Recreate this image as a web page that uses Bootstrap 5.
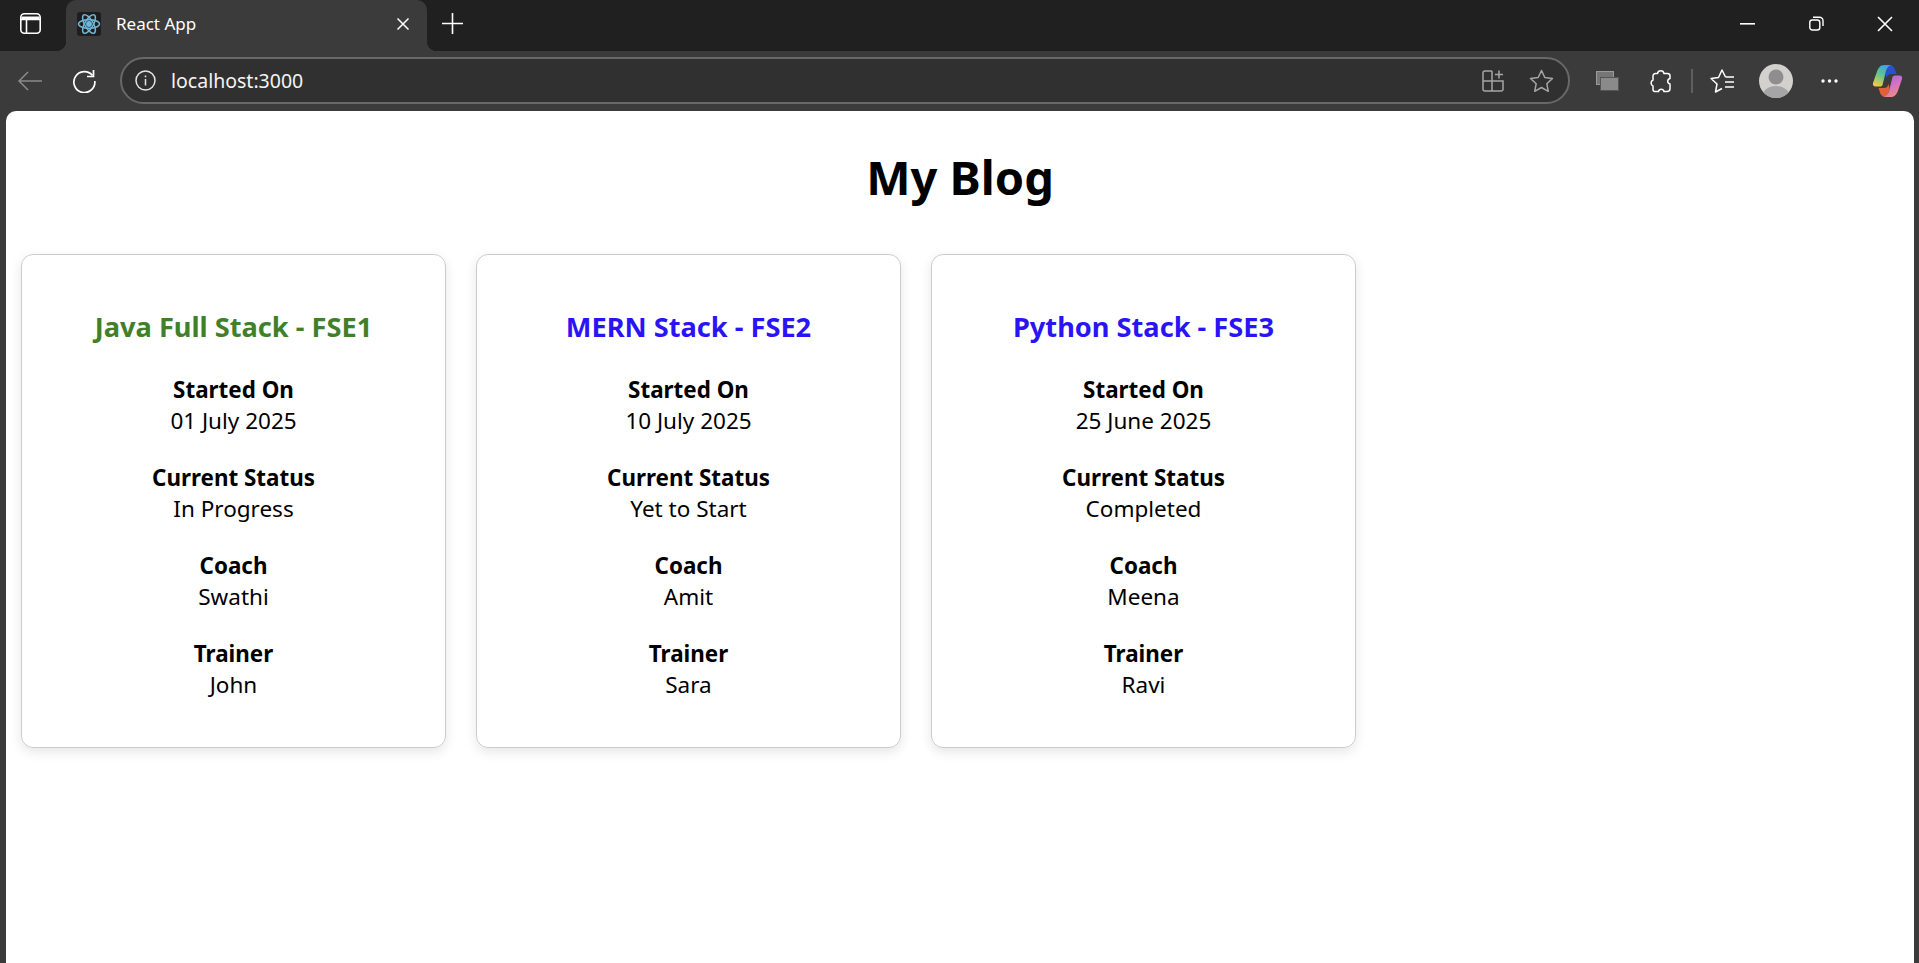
<!DOCTYPE html>
<html lang="en">
<head>
<meta charset="utf-8">
<title>React App</title>
<link href="https://cdn.jsdelivr.net/npm/bootstrap@5.3.0/dist/css/bootstrap.min.css" rel="stylesheet">
<style>
html,body{height:100%;overflow:hidden}
body{background:#3b3b3b;font-family:"Noto Sans","Open Sans",sans-serif;color:#000}
.tabstrip{height:51px;background:#202020;color:#fff;padding:0 0 4px 20px}
.slot{flex:none;display:block}
.browsertab{width:361px;height:51px;margin-left:25px;background:#3b3b3b;border-radius:10px 10px 0 0;position:relative;font-size:17px;padding:0 17px 4px 11px;align-self:flex-start}
.browsertab::before,.browsertab::after{content:"";position:absolute;bottom:0;width:10px;height:10px}
.browsertab::before{left:-10px;background:radial-gradient(circle at 0 0,transparent 10px,#3b3b3b 10.5px)}
.browsertab::after{right:-10px;background:radial-gradient(circle at 100% 0,transparent 10px,#3b3b3b 10.5px)}
.favbox{width:24px;height:24px;background:#1e1e1e;border-radius:3px;margin-right:15px}
.newtab{margin-left:15px}
.minbtn{margin-right:54px}
.restorebtn{margin-right:53px}
.closebtn{margin-right:26px}
.toolbar{height:60px;padding:6px 15px 7px 18px;color:#fff}
.reloadicon{margin-left:30px}
.addressbar{width:1450px;height:47px;margin:0 26px 0 24px;background:#303030;border:2px solid #686868;border-radius:24px;padding:0 14px 0 13px}
.urltext{font-size:19.5px;margin-left:15px;color:#f4f4f4}
.staricon{margin-left:25px}
.puzzleicon{margin-left:31px}
.tooldivider{width:2px;height:24px;background:#5f5f5f;margin:0 17px 0 19px}
.avataricon{margin-left:24px}
.dotsicon{margin-left:28px}
.copiloticon{margin-left:34px}
.pagearea{background:#fff;margin:0 5px 0 6px;border-radius:10px 10px 0 0;flex:1 1 auto;min-height:0}
.blogtitle{font-size:47px;font-weight:700;line-height:64px;margin:34px 0 45px;text-align:center}
.cardrow{padding-left:15px;gap:30px}
.blogcard{width:425px;height:494px;border:1px solid #ccc;border-radius:12px;box-shadow:0 4px 12px rgba(0,0,0,.1);padding:54px 16px 0;text-align:center}
.blogcard h3{font-size:27.2px;font-weight:700;line-height:36px;margin:0 0 29px}
.tgreen{color:#41802a}
.tblue{color:#2a14f5}
.infoblock{font-size:22.5px;line-height:32px;margin-bottom:25px}
.infoblock b{display:block;font-weight:700;font-size:22.4px;line-height:31px}
</style>
</head>
<body class="d-flex flex-column">
<div class="tabstrip d-flex align-items-center">
  <svg class="slot" width="21" height="21" viewBox="0 0 21 21" fill="none" stroke="#fff" stroke-width="1.6"><rect x=".8" y=".8" width="19.4" height="19.4" rx="3.5"/><path d="M1.500 3.500h18v3h-18z" fill="#fff" stroke="none"/><path d="M1 6.500h19M6.500 6.500v13.500"/></svg>
  <div class="browsertab d-flex align-items-center">
    <span class="favbox d-flex align-items-center justify-content-center">
      <svg width="24" height="24" viewBox="0 0 24 24" fill="none" stroke="#6fb7d8" stroke-width="1.5"><ellipse cx="12" cy="12" rx="10.5" ry="4.2"/><ellipse cx="12" cy="12" rx="10.5" ry="4.2" transform="rotate(60 12 12)"/><ellipse cx="12" cy="12" rx="10.5" ry="4.2" transform="rotate(120 12 12)"/><circle cx="12" cy="12" r="2.2" fill="#6fb7d8"/></svg>
    </span>
    <span class="flex-grow-1">React App</span>
    <svg class="slot" width="14" height="14" viewBox="0 0 14 14" stroke="#fff" stroke-width="1.5"><path d="M1.500 1.500l11 11M12.500 1.500l-11 11"/></svg>
  </div>
  <svg class="slot newtab" width="21" height="21" viewBox="0 0 21 21" stroke="#fff" stroke-width="1.6"><path d="M10.500 0v21M0 10.500h21"/></svg>
  <div class="flex-grow-1"></div>
  <svg class="slot minbtn" width="15" height="2" viewBox="0 0 15 2"><rect width="15" height="1.6" fill="#fff"/></svg>
  <svg class="slot restorebtn" width="15" height="15" viewBox="0 0 15 15" fill="none" stroke="#fff" stroke-width="1.4"><rect x=".8" y="4" width="10" height="10" rx="2.500"/><path d="M4 1.300h6.500a3.500 3.500 0 0 1 3.500 3.500V10"/></svg>
  <svg class="slot closebtn" width="16" height="16" viewBox="0 0 16 16" stroke="#fff" stroke-width="1.6"><path d="M1 1l14 14M15 1L1 15"/></svg>
</div>
<div class="toolbar d-flex align-items-center">
  <svg class="slot" width="24" height="20" viewBox="0 0 24 20" fill="none" stroke="#8b8b8b" stroke-width="1.500"><path d="M24 10H1M10 1l-9 9 9 9"/></svg>
  <svg class="slot reloadicon" width="24" height="24" viewBox="0 0 24 24" fill="none" stroke="#fff" stroke-width="1.700"><path d="M20.500 6.500A10.500 10.500 0 1 0 22.800 12"/><path d="M21.500 1v6.500H15"/></svg>
  <div class="addressbar d-flex align-items-center">
    <svg class="slot" width="21" height="21" viewBox="0 0 21 21" fill="none" stroke="#e4e4e4" stroke-width="1.500"><circle cx="10.500" cy="10.500" r="9.500"/><path d="M10.500 9v6.500M10.500 5.500v1.800"/></svg>
    <span class="urltext flex-grow-1">localhost:3000</span>
    <svg class="slot" width="22" height="22" viewBox="0 0 22 22" fill="none" stroke="#a5a5a5" stroke-width="1.500"><path d="M10 1H3a2 2 0 0 0-2 2v16a2 2 0 0 0 2 2h16a2 2 0 0 0 2-2v-8H1M10 1v20M17 .5v8M13 4.500h8"/></svg>
    <svg class="slot staricon" width="25" height="24" viewBox="0 0 25 24" fill="none" stroke="#a5a5a5" stroke-width="1.500" stroke-linejoin="round"><path d="M12.500 1.500l3.300 7 7.700.9-5.700 5.300 1.500 7.600-6.800-3.800-6.800 3.800 1.500-7.600L1.500 9.400l7.700-.9z"/></svg>
  </div>
  <svg class="slot" width="23" height="20" viewBox="0 0 23 20"><rect x=".5" y=".5" width="17" height="13" fill="#767676" stroke="#9a9a9a"/><rect x="4.500" y="6.500" width="18" height="13" fill="#8a8a8a" stroke="#555"/></svg>
  <svg class="slot puzzleicon" width="22" height="24" viewBox="0 0 22 24" fill="none" stroke="#fff" stroke-width="1.500" stroke-linejoin="round"><path d="M7.500 4.500a3.300 3.300 0 0 1 6.500 0h3.500a2.500 2.500 0 0 1 2.500 2.500v2.500a2.800 2.800 0 0 0 0 5.500v4.500a3 3 0 0 1-3 3h-3a2.800 2.800 0 0 0-5.500 0H5a2 2 0 0 1-2-2v-3.500a3.300 3.300 0 0 1 0-6V7a2.500 2.500 0 0 1 2.500-2.500z"/></svg>
  <span class="slot tooldivider"></span>
  <svg class="slot" width="25" height="24" viewBox="0 0 25 24" fill="none" stroke="#fff" stroke-width="1.500" stroke-linejoin="round"><path d="M12 19.500L5.500 23 7 15 1 9.500l7.500-1L12 1l3.500 7"/><path d="M15.500 8H24M15 13h9M15 18h9"/></svg>
  <svg class="slot avataricon" width="34" height="34" viewBox="0 0 34 34"><defs><clipPath id="avc"><circle cx="17" cy="17" r="17"/></clipPath></defs><g clip-path="url(#avc)"><rect width="34" height="34" fill="#d2d1ce"/><circle cx="17" cy="13" r="7.500" fill="#8e8e8e"/><ellipse cx="17" cy="33" rx="14" ry="11" fill="#a5a5a5"/></g></svg>
  <svg class="slot dotsicon" width="17" height="4" viewBox="0 0 17 4" fill="#fff"><circle cx="2" cy="2" r="1.700"/><circle cx="8.500" cy="2" r="1.700"/><circle cx="15" cy="2" r="1.700"/></svg>
  <svg class="slot copiloticon" width="31" height="32" viewBox="0 0 30 32"><defs><linearGradient id="cpa" x1="0.700" y1="0" x2="0.300" y2="1"><stop offset="0" stop-color="#3f9fe8"/><stop offset=".5" stop-color="#5fc98a"/><stop offset="1" stop-color="#f3c84a"/></linearGradient><linearGradient id="cpb" x1="0.300" y1="0" x2="0.700" y2="1"><stop offset="0" stop-color="#ef8f78"/><stop offset=".5" stop-color="#d874c0"/><stop offset="1" stop-color="#a868dc"/></linearGradient></defs><path d="M17 0c3 0 5 2 6 6l1 3h-5c-3 0-4 1-5 4l-1-4c1-5 2-8 4-9z" fill="#2b4fd0"/><path d="M13 32c-3 0-5-2-6-6l-1-3h5c3 0 4-1 5-4l1 4c-1 5-2 8-4 9z" fill="#e0603a"/><path d="M8 1c1.500-1 3-1 5-1h6c-4 1-5 4-6 8l-3 12c-.5 1-1.500 1.500-3 1.500H3c-2 0-3-1.500-2.500-3.500L5 5c1-2 2-3 3-4z" fill="url(#cpa)"/><path d="M8 1c1.500-1 3-1 5-1h6c-4 1-5 4-6 8l-3 12c-.5 1-1.500 1.500-3 1.500H3c-2 0-3-1.500-2.500-3.500L5 5c1-2 2-3 3-4z" transform="rotate(180 15 16)" fill="url(#cpb)"/></svg>
</div>
<main class="pagearea">
  <h1 class="blogtitle">My Blog</h1>
  <div class="d-flex cardrow">
    <section class="blogcard">
      <h3 class="tgreen">Java Full Stack - FSE1</h3>
      <div class="infoblock"><b>Started On</b>01 July 2025</div>
      <div class="infoblock"><b>Current Status</b>In Progress</div>
      <div class="infoblock"><b>Coach</b>Swathi</div>
      <div class="infoblock"><b>Trainer</b>John</div>
    </section>
    <section class="blogcard">
      <h3 class="tblue">MERN Stack - FSE2</h3>
      <div class="infoblock"><b>Started On</b>10 July 2025</div>
      <div class="infoblock"><b>Current Status</b>Yet to Start</div>
      <div class="infoblock"><b>Coach</b>Amit</div>
      <div class="infoblock"><b>Trainer</b>Sara</div>
    </section>
    <section class="blogcard">
      <h3 class="tblue">Python Stack - FSE3</h3>
      <div class="infoblock"><b>Started On</b>25 June 2025</div>
      <div class="infoblock"><b>Current Status</b>Completed</div>
      <div class="infoblock"><b>Coach</b>Meena</div>
      <div class="infoblock"><b>Trainer</b>Ravi</div>
    </section>
  </div>
</main>
</body>
</html>
